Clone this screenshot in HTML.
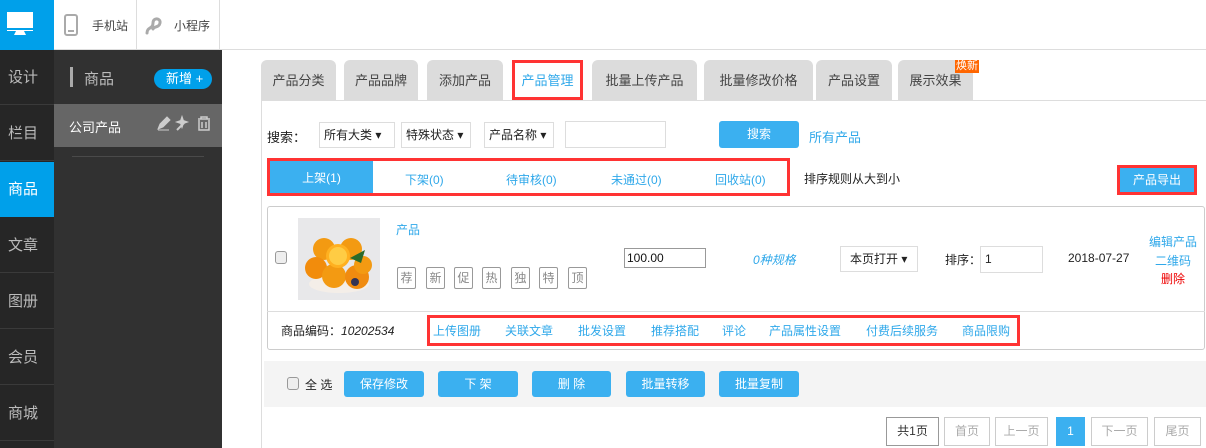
<!DOCTYPE html>
<html><head><meta charset="utf-8"><style>
*{margin:0;padding:0;box-sizing:border-box}
body{width:1206px;height:448px;overflow:hidden;background:#fff;font-family:"Liberation Sans","Noto Sans CJK SC",sans-serif;font-size:13px;color:#333;position:relative}
div{white-space:nowrap}
.a{position:absolute}
.nav{left:0;top:50px;width:54px;height:398px;background:#262626}
.ni{position:absolute;left:0;width:54px;height:55px;color:#bbb;font-size:15px;line-height:55px;padding-left:8px;border-bottom:1px solid #3a3a3a}
.tab{position:absolute;top:60px;height:40px;background:#dcdcdc;border-radius:6px 6px 0 0;color:#444;font-size:13px;line-height:42px;text-align:center}
.blue{color:#2fa8ea}
.sel{position:absolute;top:122px;height:26px;border:1px solid #ddd;line-height:24px;padding-left:4px;font-size:12px;color:#222;overflow:hidden}
.btn{position:absolute;background:#3bb0f0;color:#fff;border-radius:3px;text-align:center;font-size:12px}
.tg{position:absolute;top:267px;width:19px;height:22px;border:1px solid #999;border-radius:2px;color:#888;font-size:12px;text-align:center;line-height:20px}
.lk{position:absolute;top:322px;color:#2fa8ea;font-size:12px}
.pg{position:absolute;top:417px;height:29px;border:1px solid #ccc;color:#aaa;text-align:center;line-height:27px;font-size:12px}
</style></head><body>
<div class="a" style="left:0;top:0;width:54px;height:50px;background:#00a0ea">
<svg width="54" height="50"><rect x="7" y="12" width="26" height="19" fill="#fff"/><rect x="7" y="28" width="26" height="2" fill="#00a0ea"/><path d="M16 31h8l2 4h-12z" fill="#fff"/></svg></div>
<div class="a" style="left:54px;top:0;width:1152px;height:50px;border-bottom:1px solid #ddd"></div>
<div class="a" style="left:136px;top:0;width:1px;height:50px;background:#ddd"></div>
<div class="a" style="left:219px;top:0;width:1px;height:50px;background:#ddd"></div>
<svg class="a" style="left:64px;top:14px" width="14" height="22"><rect x="1" y="1" width="12" height="20" rx="2" fill="none" stroke="#aaa" stroke-width="2"/><line x1="4" y1="17" x2="10" y2="17" stroke="#aaa" stroke-width="2"/></svg>
<div class="a" style="left:92px;top:17px;font-size:12px;color:#444">手机站</div>
<svg class="a" style="left:144px;top:15px" width="20" height="22"><path d="M3 18c0-6 6-4 6-10s8-5 7 0-6 3-7 6" fill="none" stroke="#aaa" stroke-width="3" stroke-linecap="round"/></svg>
<div class="a" style="left:174px;top:17px;font-size:12px;color:#444">小程序</div>
<div class="a nav"></div>
<div class="ni" style="top:50px">设计</div>
<div class="ni" style="top:106px">栏目</div>
<div class="ni" style="top:162px;background:#00a0ea;color:#fff;border:0">商品</div>
<div class="ni" style="top:218px">文章</div>
<div class="ni" style="top:274px">图册</div>
<div class="ni" style="top:330px">会员</div>
<div class="ni" style="top:386px">商城</div>
<div class="a" style="left:54px;top:50px;width:168px;height:398px;background:#313131"></div>
<div class="a" style="left:70px;top:67px;width:3px;height:20px;background:#aaa"></div>
<div class="a" style="left:84px;top:68px;color:#bbb;font-size:15px">商品</div>
<div class="a" style="left:154px;top:69px;width:58px;height:20px;background:#00a0ea;border-radius:10px;color:#fff;font-size:13px;line-height:20px;padding-left:12px">新增 +</div>
<div class="a" style="left:54px;top:104px;width:168px;height:43px;background:#666"></div>
<div class="a" style="left:69px;top:117px;color:#fff;font-size:13px">公司产品</div>
<svg class="a" style="left:157px;top:115px" width="56" height="16"><path d="M1 14l2-5 7-7 3 3-7 7z M1 15h11" fill="#ccc" stroke="#ccc" stroke-width="1"/><path d="M20 15l7-7M25 3l1 3 3 1-3 1-1 3-1-3-3-1 3-1z" stroke="#ccc" fill="#ccc" stroke-width="2"/><path d="M41 4h12M44 4v-2h6v2M42 5v10h10v-10M45 7v6M49 7v6" fill="none" stroke="#ccc" stroke-width="1.5"/></svg>
<div class="a" style="left:72px;top:156px;width:132px;height:1px;background:#4a4a4a"></div>

<div class="a" style="left:261px;top:100px;width:945px;height:348px;border-left:1px solid #ddd;border-top:1px solid #ddd"></div>
<div class="tab" style="left:261px;width:75px">产品分类</div>
<div class="tab" style="left:344px;width:74px">产品品牌</div>
<div class="tab" style="left:427px;width:76px">添加产品</div>
<div class="tab" style="left:512px;width:71px;background:#fff;border:3px solid #f33;border-radius:0;color:#2fa8ea;line-height:36px">产品管理</div>
<div class="tab" style="left:592px;width:105px">批量上传产品</div>
<div class="tab" style="left:704px;width:109px">批量修改价格</div>
<div class="tab" style="left:816px;width:76px">产品设置</div>
<div class="tab" style="left:898px;width:75px">展示效果</div>
<div class="a" style="left:955px;top:60px;width:24px;height:13px;background:#f60;color:#fff;font-size:11px;line-height:13px;text-align:center">焕新</div>

<div class="a" style="left:267px;top:127px;font-size:13px;color:#222">搜索：</div>
<div class="sel" style="left:319px;width:76px">所有大类 ▾</div>
<div class="sel" style="left:401px;width:70px">特殊状态 ▾</div>
<div class="sel" style="left:484px;width:70px">产品名称 ▾</div>
<div class="a" style="left:565px;top:121px;width:101px;height:27px;border:1px solid #ddd"></div>
<div class="btn" style="left:719px;top:121px;width:80px;height:27px;line-height:27px">搜索</div>
<div class="a blue" style="left:809px;top:127px;font-size:13px">所有产品</div>

<div class="a" style="left:270px;top:161px;width:103px;height:32px;background:#3bb0f0;color:#fff;line-height:34px;text-align:center;font-size:12px">上架(1)</div>
<div class="a blue" style="left:405px;top:171px;font-size:12px">下架(0)</div>
<div class="a blue" style="left:506px;top:171px;font-size:12px">待审核(0)</div>
<div class="a blue" style="left:611px;top:171px;font-size:12px">未通过(0)</div>
<div class="a blue" style="left:715px;top:171px;font-size:12px">回收站(0)</div>
<div class="a" style="left:267px;top:158px;width:523px;height:38px;border:3px solid #f33"></div>
<div class="a" style="left:804px;top:170px;font-size:12px;color:#222">排序规则从大到小</div>
<div class="btn" style="left:1117px;top:165px;width:80px;height:30px;line-height:24px;border:3px solid #f33;border-radius:0">产品导出</div>

<div class="a" style="left:267px;top:206px;width:938px;height:144px;border:1px solid #ccc;border-radius:3px"></div>
<div class="a" style="left:267px;top:311px;width:938px;height:1px;background:#ddd"></div>
<div class="a" style="left:275px;top:251px;width:12px;height:13px;border:1px solid #999;border-radius:3px;background:#eee"></div>
<div class="a" style="left:298px;top:218px;width:82px;height:82px;background:#e8e8ea">
<svg width="82" height="82"><ellipse cx="41" cy="66" rx="30" ry="9" fill="#f4eee8"/><circle cx="26" cy="31" r="11" fill="#f39a12"/><circle cx="53" cy="31" r="11" fill="#f39a12"/><circle cx="18" cy="50" r="11" fill="#f28c0c"/><circle cx="36" cy="58" r="12" fill="#f39a12"/><circle cx="59" cy="59" r="12" fill="#f08b10"/><circle cx="65" cy="47" r="9" fill="#f39a12"/><circle cx="40" cy="38" r="12" fill="#ffb020"/><circle cx="40" cy="38" r="9" fill="#ffcc44"/><path d="M52 40l15-8-4 13z" fill="#2a6a2a"/><circle cx="57" cy="64" r="4" fill="#335"/></svg></div>
<div class="a blue" style="left:396px;top:221px;font-size:12px">产品</div>
<div class="tg" style="left:397px">荐</div><div class="tg" style="left:426px">新</div><div class="tg" style="left:454px">促</div><div class="tg" style="left:482px">热</div><div class="tg" style="left:511px">独</div><div class="tg" style="left:539px">特</div><div class="tg" style="left:568px">顶</div>
<div class="a" style="left:624px;top:248px;width:82px;height:20px;border:1px solid #999;font-size:12px;line-height:18px;padding-left:2px;color:#111">100.00</div>
<div class="a blue" style="left:753px;top:251px;font-size:12px;font-style:italic">0种规格</div>
<div class="a" style="left:840px;top:246px;width:78px;height:26px;border:1px solid #ddd;line-height:24px;padding-left:9px;font-size:12px;color:#222">本页打开 ▾</div>
<div class="a" style="left:945px;top:251px;font-size:12px;color:#222">排序：</div>
<div class="a" style="left:980px;top:246px;width:63px;height:27px;border:1px solid #ddd;line-height:25px;padding-left:4px;font-size:12px;color:#222">1</div>
<div class="a" style="left:1068px;top:251px;font-size:12px;color:#222">2018-07-27</div>
<div class="a blue" style="left:1149px;top:233px;font-size:12px">编辑产品</div>
<div class="a blue" style="left:1155px;top:252px;font-size:12px">二维码</div>
<div class="a" style="left:1161px;top:270px;font-size:12px;color:#e00">删除</div>
<div class="a" style="left:281px;top:322px;font-size:12px;color:#222">商品编码：<i>10202534</i></div>
<div class="a" style="left:427px;top:315px;width:593px;height:31px;border:3px solid #f33"></div>
<div class="lk" style="left:433px">上传图册</div><div class="lk" style="left:505px">关联文章</div><div class="lk" style="left:578px">批发设置</div><div class="lk" style="left:651px">推荐搭配</div><div class="lk" style="left:722px">评论</div><div class="lk" style="left:769px">产品属性设置</div><div class="lk" style="left:866px">付费后续服务</div><div class="lk" style="left:962px">商品限购</div>

<div class="a" style="left:264px;top:361px;width:942px;height:46px;background:#f4f4f4"></div>
<div class="a" style="left:287px;top:377px;width:12px;height:13px;border:1px solid #999;border-radius:3px;background:#eee"></div>
<div class="a" style="left:305px;top:376px;font-size:12px;color:#222">全 选</div>
<div class="btn" style="left:344px;top:371px;width:80px;height:26px;line-height:26px">保存修改</div>
<div class="btn" style="left:438px;top:371px;width:80px;height:26px;line-height:26px">下 架</div>
<div class="btn" style="left:532px;top:371px;width:79px;height:26px;line-height:26px">删 除</div>
<div class="btn" style="left:626px;top:371px;width:79px;height:26px;line-height:26px">批量转移</div>
<div class="btn" style="left:719px;top:371px;width:80px;height:26px;line-height:26px">批量复制</div>

<div class="pg" style="left:886px;width:53px;border-color:#999;color:#333">共1页</div>
<div class="pg" style="left:944px;width:46px">首页</div>
<div class="pg" style="left:995px;width:53px">上一页</div>
<div class="pg" style="left:1056px;width:29px;background:#3bb0f0;border-color:#3bb0f0;color:#fff">1</div>
<div class="pg" style="left:1091px;width:57px">下一页</div>
<div class="pg" style="left:1154px;width:47px">尾页</div>
</body></html>
